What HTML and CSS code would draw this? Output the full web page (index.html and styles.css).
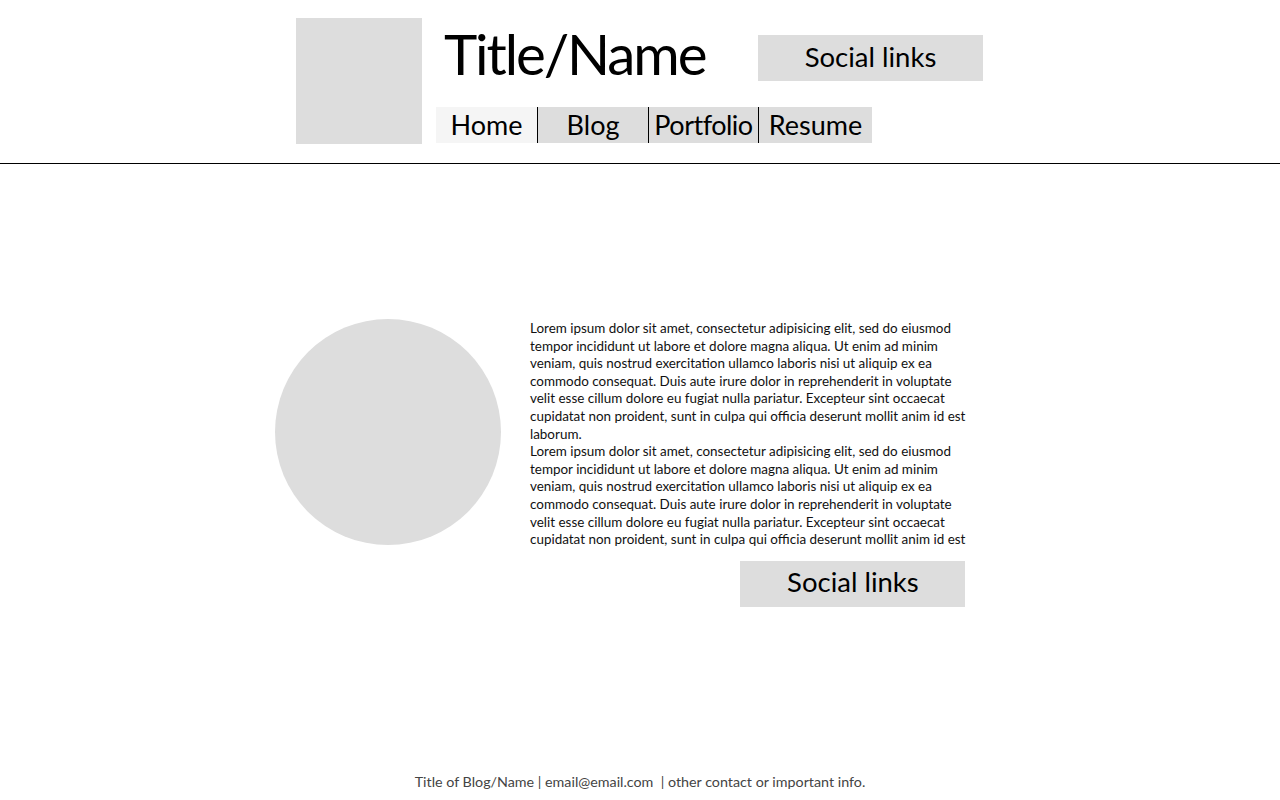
FILE: index.html
```html
<!DOCTYPE html>
<html>
<head>
<meta charset="utf-8">
<link rel="stylesheet" href="styles.css">
</head>
<body>
<header class="site-header">
  <div class="header-inner">
    <div class="logo"></div>
    <div class="header-main">
      <div class="header-top">
        <h1 class="title">Title/Name</h1>
        <a class="social social-top">Social links</a>
      </div>
      <nav class="nav">
        <a class="nav-item nav-home">Home</a>
        <a class="nav-item nav-blog">Blog</a>
        <a class="nav-item nav-portfolio">Portfolio</a>
        <a class="nav-item nav-resume">Resume</a>
      </nav>
    </div>
  </div>
</header>
<main class="content">
  <div class="avatar"></div>
  <div class="about">
    <p class="text">Lorem ipsum dolor sit amet, consectetur adipisicing elit, sed do eiusmod<br>tempor incididunt ut labore et dolore magna aliqua. Ut enim ad minim<br>veniam, quis nostrud exercitation ullamco laboris nisi ut aliquip ex ea<br>commodo consequat. Duis aute irure dolor in reprehenderit in voluptate<br>velit esse cillum dolore eu fugiat nulla pariatur. Excepteur sint occaecat<br>cupidatat non proident, sunt in culpa qui officia deserunt mollit anim id est<br>laborum.<br>Lorem ipsum dolor sit amet, consectetur adipisicing elit, sed do eiusmod<br>tempor incididunt ut labore et dolore magna aliqua. Ut enim ad minim<br>veniam, quis nostrud exercitation ullamco laboris nisi ut aliquip ex ea<br>commodo consequat. Duis aute irure dolor in reprehenderit in voluptate<br>velit esse cillum dolore eu fugiat nulla pariatur. Excepteur sint occaecat<br>cupidatat non proident, sunt in culpa qui officia deserunt mollit anim id est</p>
    <a class="social social-bottom">Social links</a>
  </div>
</main>
<footer class="footer">Title of Blog/Name | email@email.com &nbsp;| other contact or important info.</footer>
</body>
</html>
```

FILE: styles.css
```css
* { box-sizing: border-box; }
html, body { margin: 0; padding: 0; }
body {
  width: 1280px;
  height: 800px;
  font-family: Lato, "Noto Sans", sans-serif;
  color: #000;
  background: #fff;
  display: flex;
  flex-direction: column;
  overflow: hidden;
}
.site-header {
  height: 164px;
  border-bottom: 1px solid #000;
  padding-top: 18px;
}
.header-inner {
  display: flex;
  margin-left: 296px;
}
.logo {
  width: 126px;
  height: 126px;
  background: #dddddd;
}
.header-main {
  margin-left: 14px;
  display: flex;
  flex-direction: column;
}
.header-top {
  height: 89px;
  display: flex;
  align-items: flex-start;
}
.title {
  margin: 0;
  padding-left: 8px;
  width: 322px;
  font-weight: 400;
  font-size: 56.5px;
  line-height: 70px;
  letter-spacing: -2.1px;
}
.social {
  display: flex;
  align-items: center;
  justify-content: center;
  background: #dddddd;
  width: 225px;
  height: 46px;
  padding-bottom: 4px;
  font-size: 27.5px;
  color: #000;
}
.social-top { margin-top: 17px; }
.nav {
  display: flex;
  height: 36px;
}
.nav-item {
  display: flex;
  align-items: center;
  justify-content: center;
  background: #dddddd;
  font-size: 27px;
  color: #000;
  height: 36px;
  padding-bottom: 1px;
}
.nav-home { width: 102px; background: #f5f5f5; border-right: 1px solid #000; }
.nav-blog { width: 111px; border-right: 1px solid #000; }
.nav-portfolio { width: 110px; border-right: 1px solid #000; letter-spacing: -0.5px; }
.nav-resume { width: 113px; }
.content {
  flex: 1;
  display: flex;
  align-items: flex-start;
  padding-left: 275px;
  padding-top: 155px;
}
.avatar {
  width: 226px;
  height: 226px;
  border-radius: 50%;
  background: #dddddd;
}
.about {
  margin-left: 29px;
  display: flex;
  flex-direction: column;
  align-items: flex-end;
}
.text {
  margin: 0;
  padding-top: 1px;
  font-size: 13.45px;
  line-height: 17.6px;
  white-space: nowrap;
  color: #111;
}
.social-bottom {
  margin-top: 12px;
  height: 46px;
}
.footer {
  height: 27px;
  text-align: center;
  font-size: 14.3px;
  color: #444;
}
```
